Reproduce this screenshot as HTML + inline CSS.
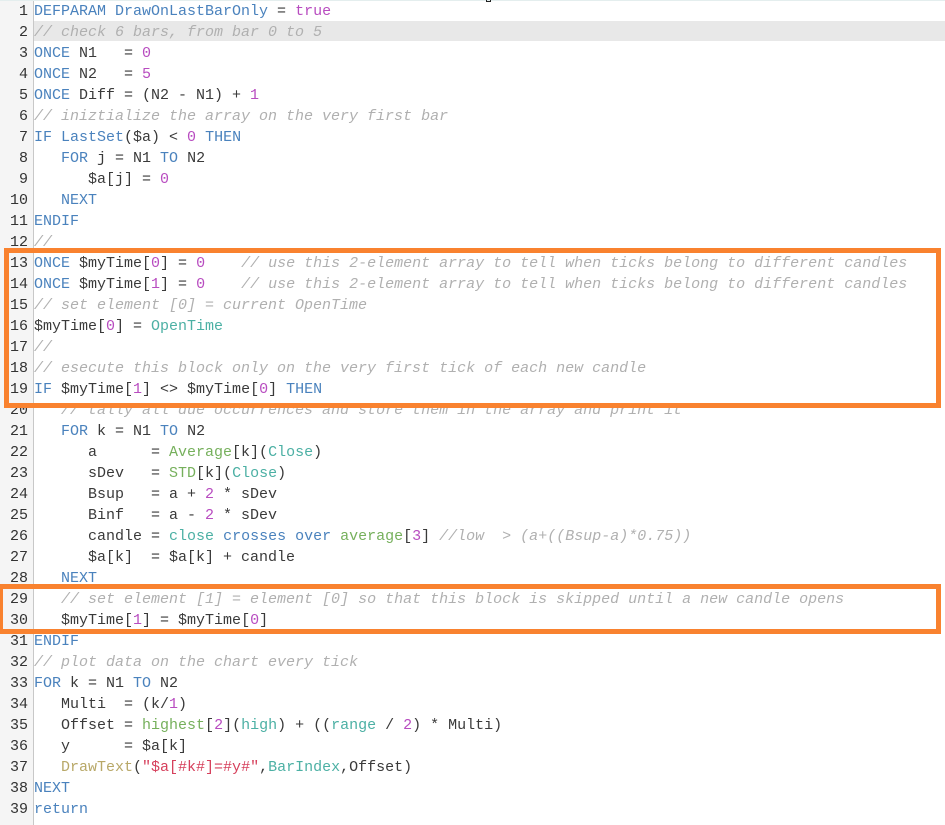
<!DOCTYPE html>
<html><head><meta charset="utf-8"><style>
html,body{margin:0;padding:0;background:#fff;width:945px;height:825px;overflow:hidden}
#g{position:absolute;left:0;top:0;width:33px;height:825px;background:#f5f5f5;border-right:1px solid #c8c8c8}
#hl{position:absolute;left:34px;top:21px;width:911px;height:20px;background:#e8e8e8}
#t{position:absolute;left:0;top:0;width:945px;height:1px;background:#e4eeee}
#m{position:absolute;left:486px;top:0;width:5px;height:2px;border:1px solid #222;border-top:0;box-sizing:border-box}
#c{position:absolute;left:0;top:1px;font:15px/21px "Liberation Mono",monospace;color:#3a3a3a}
.l{position:relative;height:21px;white-space:pre;padding-left:34px;width:911px}
.l i.n{position:absolute;left:0;width:28px;text-align:right;font-style:normal;color:#333}
.k{color:#4a82bd}.v{color:#b84cc0}.c{color:#b0b0b0;font-style:italic}.f{color:#4cb0a4}.g{color:#76b05c}.y{color:#b8a868}.s{color:#d6405c}
.b{position:absolute;border:5px solid #f9822f;box-sizing:border-box}
</style></head><body>
<div id="g"></div><div id="hl"></div><div id="t"></div><div id="m"></div>
<div id="c">
<div class="l"><i class="n">1</i><span class="k">DEFPARAM DrawOnLastBarOnly</span> = <span class="v">true</span></div>
<div class="l"><i class="n">2</i><span class="c">// check 6 bars, from bar 0 to 5</span></div>
<div class="l"><i class="n">3</i><span class="k">ONCE</span> N1   = <span class="v">0</span></div>
<div class="l"><i class="n">4</i><span class="k">ONCE</span> N2   = <span class="v">5</span></div>
<div class="l"><i class="n">5</i><span class="k">ONCE</span> Diff = (N2 - N1) + <span class="v">1</span></div>
<div class="l"><i class="n">6</i><span class="c">// iniztialize the array on the very first bar</span></div>
<div class="l"><i class="n">7</i><span class="k">IF LastSet</span>($a) &lt; <span class="v">0</span> <span class="k">THEN</span></div>
<div class="l"><i class="n">8</i>   <span class="k">FOR</span> j = N1 <span class="k">TO</span> N2</div>
<div class="l"><i class="n">9</i>      $a[j] = <span class="v">0</span></div>
<div class="l"><i class="n">10</i>   <span class="k">NEXT</span></div>
<div class="l"><i class="n">11</i><span class="k">ENDIF</span></div>
<div class="l"><i class="n">12</i><span class="c">//</span></div>
<div class="l"><i class="n">13</i><span class="k">ONCE</span> $myTime[<span class="v">0</span>] = <span class="v">0</span>    <span class="c">// use this 2-element array to tell when ticks belong to different candles</span></div>
<div class="l"><i class="n">14</i><span class="k">ONCE</span> $myTime[<span class="v">1</span>] = <span class="v">0</span>    <span class="c">// use this 2-element array to tell when ticks belong to different candles</span></div>
<div class="l"><i class="n">15</i><span class="c">// set element [0] = current OpenTime</span></div>
<div class="l"><i class="n">16</i>$myTime[<span class="v">0</span>] = <span class="f">OpenTime</span></div>
<div class="l"><i class="n">17</i><span class="c">//</span></div>
<div class="l"><i class="n">18</i><span class="c">// esecute this block only on the very first tick of each new candle</span></div>
<div class="l"><i class="n">19</i><span class="k">IF</span> $myTime[<span class="v">1</span>] &lt;&gt; $myTime[<span class="v">0</span>] <span class="k">THEN</span></div>
<div class="l"><i class="n">20</i>   <span class="c">// tally all due occurrences and store them in the array and print it</span></div>
<div class="l"><i class="n">21</i>   <span class="k">FOR</span> k = N1 <span class="k">TO</span> N2</div>
<div class="l"><i class="n">22</i>      a      = <span class="g">Average</span>[k](<span class="f">Close</span>)</div>
<div class="l"><i class="n">23</i>      sDev   = <span class="g">STD</span>[k](<span class="f">Close</span>)</div>
<div class="l"><i class="n">24</i>      Bsup   = a + <span class="v">2</span> * sDev</div>
<div class="l"><i class="n">25</i>      Binf   = a - <span class="v">2</span> * sDev</div>
<div class="l"><i class="n">26</i>      candle = <span class="f">close</span> <span class="k">crosses over</span> <span class="g">average</span>[<span class="v">3</span>] <span class="c">//low  &gt; (a+((Bsup-a)*0.75))</span></div>
<div class="l"><i class="n">27</i>      $a[k]  = $a[k] + candle</div>
<div class="l"><i class="n">28</i>   <span class="k">NEXT</span></div>
<div class="l"><i class="n">29</i>   <span class="c">// set element [1] = element [0] so that this block is skipped until a new candle opens</span></div>
<div class="l"><i class="n">30</i>   $myTime[<span class="v">1</span>] = $myTime[<span class="v">0</span>]</div>
<div class="l"><i class="n">31</i><span class="k">ENDIF</span></div>
<div class="l"><i class="n">32</i><span class="c">// plot data on the chart every tick</span></div>
<div class="l"><i class="n">33</i><span class="k">FOR</span> k = N1 <span class="k">TO</span> N2</div>
<div class="l"><i class="n">34</i>   Multi  = (k/<span class="v">1</span>)</div>
<div class="l"><i class="n">35</i>   Offset = <span class="g">highest</span>[<span class="v">2</span>](<span class="f">high</span>) + ((<span class="f">range</span> / <span class="v">2</span>) * Multi)</div>
<div class="l"><i class="n">36</i>   y      = $a[k]</div>
<div class="l"><i class="n">37</i>   <span class="y">DrawText</span>(<span class="s">"$a[#k#]=#y#"</span>,<span class="f">BarIndex</span>,Offset)</div>
<div class="l"><i class="n">38</i><span class="k">NEXT</span></div>
<div class="l"><i class="n">39</i><span class="k">return</span></div>
</div>
<div class="b" style="left:4px;top:248px;width:937px;height:160px"></div>
<div class="b" style="left:-2px;top:584px;width:943px;height:50px"></div>
</body></html>
